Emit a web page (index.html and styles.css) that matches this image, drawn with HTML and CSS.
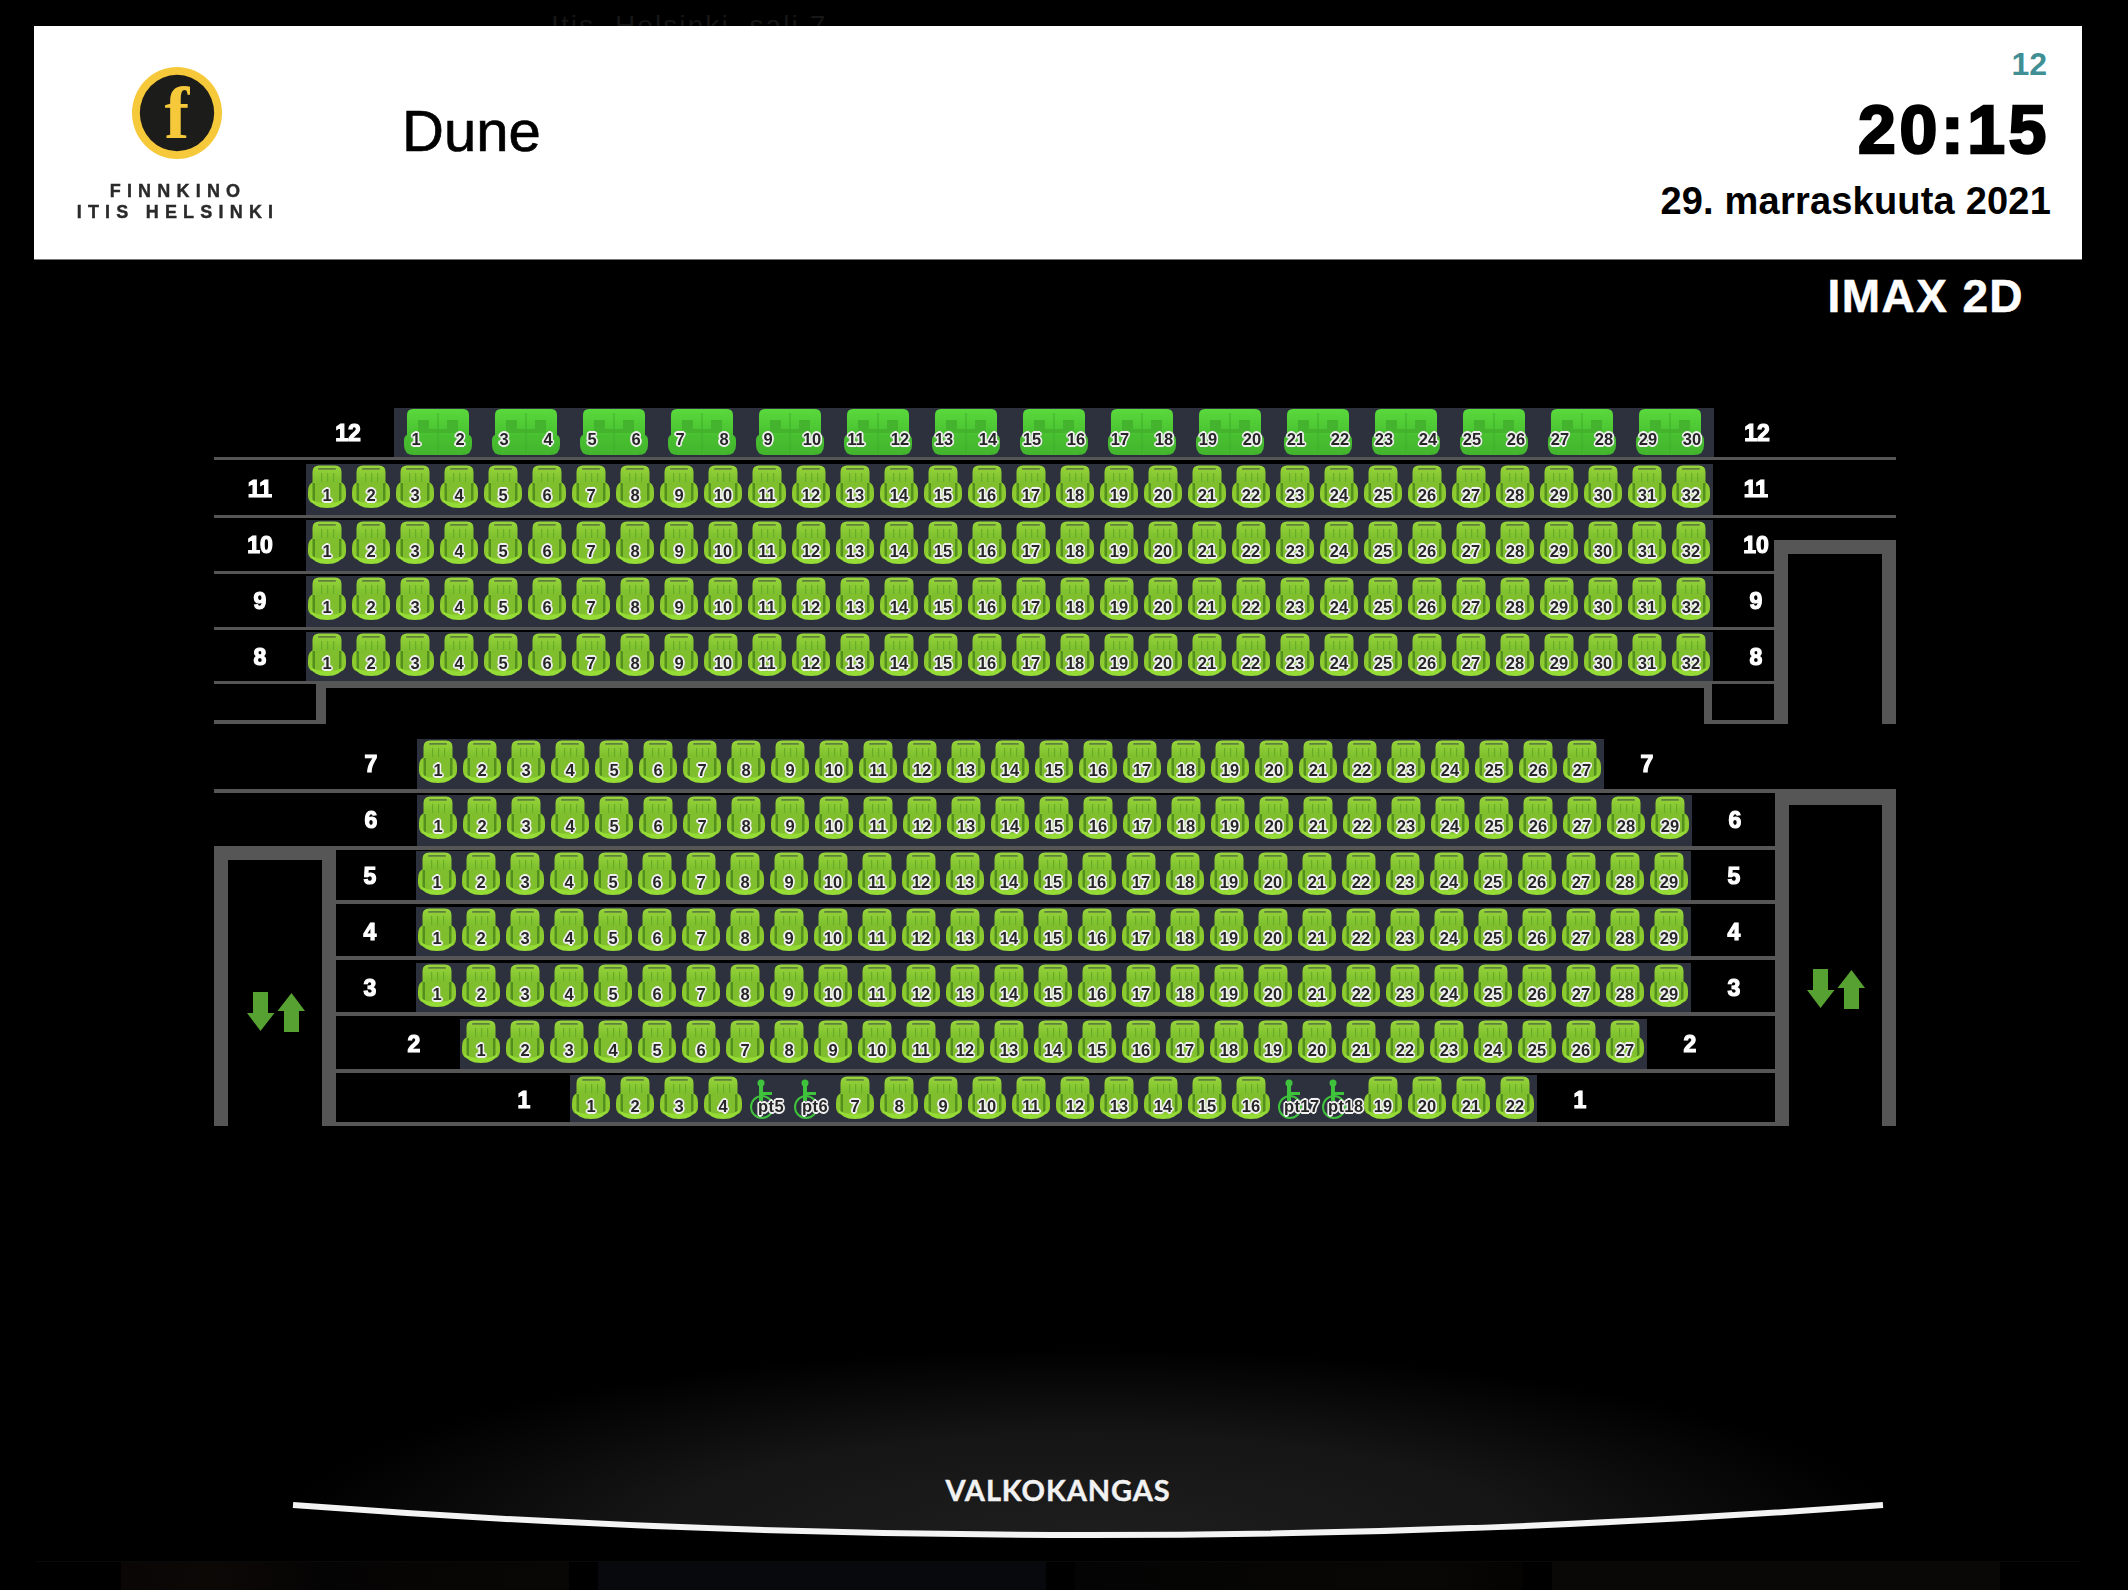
FILE: index.html
```html
<!DOCTYPE html>
<html lang="fi">
<head>
<meta charset="utf-8">
<title>Dune</title>
<link rel="stylesheet" href="styles.css">
</head>
<body>
<div class="ghost">Itis, Helsinki, sali 7</div>
<header class="head">
  <div class="brand">
    <svg class="oval" viewBox="0 0 92 94"><ellipse cx="46" cy="47" rx="46" ry="47" fill="#f6c93b"/><ellipse cx="46" cy="47" rx="38" ry="39" fill="#1c1c1a"/><text x="46" y="73" text-anchor="middle" class="oval-f">f</text></svg>
    <div class="brand-name">FINNKINO<br>ITIS HELSINKI</div>
  </div>
  <h1 class="title">Dune</h1>
  <div class="info">
    <div class="age">12</div>
    <div class="time">20:15</div>
    <div class="date">29. marraskuuta 2021</div>
  </div>
</header>
<div class="format">IMAX 2D</div>

<section class="hall upper">
  <div class="row r12"><span class="lab">12</span><div class="seats sofas"><b class="sofa"><i>1</i><i>2</i></b><b class="sofa"><i>3</i><i>4</i></b><b class="sofa"><i>5</i><i>6</i></b><b class="sofa"><i>7</i><i>8</i></b><b class="sofa"><i>9</i><i>10</i></b><b class="sofa"><i>11</i><i>12</i></b><b class="sofa"><i>13</i><i>14</i></b><b class="sofa"><i>15</i><i>16</i></b><b class="sofa"><i>17</i><i>18</i></b><b class="sofa"><i>19</i><i>20</i></b><b class="sofa"><i>21</i><i>22</i></b><b class="sofa"><i>23</i><i>24</i></b><b class="sofa"><i>25</i><i>26</i></b><b class="sofa"><i>27</i><i>28</i></b><b class="sofa"><i>29</i><i>30</i></b></div><span class="lab end">12</span></div>
  <div class="row r11"><span class="lab">11</span><div class="seats"><b>1</b><b>2</b><b>3</b><b>4</b><b>5</b><b>6</b><b>7</b><b>8</b><b>9</b><b>10</b><b>11</b><b>12</b><b>13</b><b>14</b><b>15</b><b>16</b><b>17</b><b>18</b><b>19</b><b>20</b><b>21</b><b>22</b><b>23</b><b>24</b><b>25</b><b>26</b><b>27</b><b>28</b><b>29</b><b>30</b><b>31</b><b>32</b></div><span class="lab end">11</span></div>
  <div class="row r10"><span class="lab">10</span><div class="seats"><b>1</b><b>2</b><b>3</b><b>4</b><b>5</b><b>6</b><b>7</b><b>8</b><b>9</b><b>10</b><b>11</b><b>12</b><b>13</b><b>14</b><b>15</b><b>16</b><b>17</b><b>18</b><b>19</b><b>20</b><b>21</b><b>22</b><b>23</b><b>24</b><b>25</b><b>26</b><b>27</b><b>28</b><b>29</b><b>30</b><b>31</b><b>32</b></div><span class="lab end">10</span></div>
  <div class="row r9"><span class="lab">9</span><div class="seats"><b>1</b><b>2</b><b>3</b><b>4</b><b>5</b><b>6</b><b>7</b><b>8</b><b>9</b><b>10</b><b>11</b><b>12</b><b>13</b><b>14</b><b>15</b><b>16</b><b>17</b><b>18</b><b>19</b><b>20</b><b>21</b><b>22</b><b>23</b><b>24</b><b>25</b><b>26</b><b>27</b><b>28</b><b>29</b><b>30</b><b>31</b><b>32</b></div><span class="lab end">9</span></div>
  <div class="row r8"><span class="lab">8</span><div class="seats"><b>1</b><b>2</b><b>3</b><b>4</b><b>5</b><b>6</b><b>7</b><b>8</b><b>9</b><b>10</b><b>11</b><b>12</b><b>13</b><b>14</b><b>15</b><b>16</b><b>17</b><b>18</b><b>19</b><b>20</b><b>21</b><b>22</b><b>23</b><b>24</b><b>25</b><b>26</b><b>27</b><b>28</b><b>29</b><b>30</b><b>31</b><b>32</b></div><span class="lab end">8</span></div>
  <div class="aisle"><div class="notch-l"></div><div class="aisle-mid"></div><div class="notch-r"></div><div class="aisle-end"></div></div>
  <div class="frame frame-upper"></div>
</section>

<section class="hall lower">
  <div class="row r7"><span class="lab">7</span><div class="seats"><b>1</b><b>2</b><b>3</b><b>4</b><b>5</b><b>6</b><b>7</b><b>8</b><b>9</b><b>10</b><b>11</b><b>12</b><b>13</b><b>14</b><b>15</b><b>16</b><b>17</b><b>18</b><b>19</b><b>20</b><b>21</b><b>22</b><b>23</b><b>24</b><b>25</b><b>26</b><b>27</b></div><span class="lab end">7</span></div>
  <div class="row r6"><span class="lab">6</span><div class="seats"><b>1</b><b>2</b><b>3</b><b>4</b><b>5</b><b>6</b><b>7</b><b>8</b><b>9</b><b>10</b><b>11</b><b>12</b><b>13</b><b>14</b><b>15</b><b>16</b><b>17</b><b>18</b><b>19</b><b>20</b><b>21</b><b>22</b><b>23</b><b>24</b><b>25</b><b>26</b><b>27</b><b>28</b><b>29</b></div><span class="lab end">6</span></div>
  <div class="row r5"><span class="lab">5</span><div class="seats"><b>1</b><b>2</b><b>3</b><b>4</b><b>5</b><b>6</b><b>7</b><b>8</b><b>9</b><b>10</b><b>11</b><b>12</b><b>13</b><b>14</b><b>15</b><b>16</b><b>17</b><b>18</b><b>19</b><b>20</b><b>21</b><b>22</b><b>23</b><b>24</b><b>25</b><b>26</b><b>27</b><b>28</b><b>29</b></div><span class="lab end">5</span></div>
  <div class="row r4"><span class="lab">4</span><div class="seats"><b>1</b><b>2</b><b>3</b><b>4</b><b>5</b><b>6</b><b>7</b><b>8</b><b>9</b><b>10</b><b>11</b><b>12</b><b>13</b><b>14</b><b>15</b><b>16</b><b>17</b><b>18</b><b>19</b><b>20</b><b>21</b><b>22</b><b>23</b><b>24</b><b>25</b><b>26</b><b>27</b><b>28</b><b>29</b></div><span class="lab end">4</span></div>
  <div class="row r3"><span class="lab">3</span><div class="seats"><b>1</b><b>2</b><b>3</b><b>4</b><b>5</b><b>6</b><b>7</b><b>8</b><b>9</b><b>10</b><b>11</b><b>12</b><b>13</b><b>14</b><b>15</b><b>16</b><b>17</b><b>18</b><b>19</b><b>20</b><b>21</b><b>22</b><b>23</b><b>24</b><b>25</b><b>26</b><b>27</b><b>28</b><b>29</b></div><span class="lab end">3</span></div>
  <div class="row r2"><span class="lab">2</span><div class="seats"><b>1</b><b>2</b><b>3</b><b>4</b><b>5</b><b>6</b><b>7</b><b>8</b><b>9</b><b>10</b><b>11</b><b>12</b><b>13</b><b>14</b><b>15</b><b>16</b><b>17</b><b>18</b><b>19</b><b>20</b><b>21</b><b>22</b><b>23</b><b>24</b><b>25</b><b>26</b><b>27</b></div><span class="lab end">2</span></div>
  <div class="row r1"><span class="lab">1</span><div class="seats"><b>1</b><b>2</b><b>3</b><b>4</b><b class="wc">pt5</b><b class="wc">pt6</b><b>7</b><b>8</b><b>9</b><b>10</b><b>11</b><b>12</b><b>13</b><b>14</b><b>15</b><b>16</b><b class="wc">pt17</b><b class="wc">pt18</b><b>19</b><b>20</b><b>21</b><b>22</b></div><span class="lab end">1</span></div>
  <div class="frame frame-left"><svg class="arrows" viewBox="0 0 58 40"><path d="M6 0H21V21H27.500L13.500 39 0 21H6Z"/><path d="M37 40H52V19H58L44.500 1 30.500 19H37Z"/></svg></div>
  <div class="frame frame-right"><svg class="arrows" viewBox="0 0 58 40"><path d="M6 0H21V21H27.500L13.500 39 0 21H6Z"/><path d="M37 40H52V19H58L44.500 1 30.500 19H37Z"/></svg></div>
</section>

<section class="screen">
  <svg class="screen-art" viewBox="0 0 2128 260">
    <defs><radialGradient id="glow" gradientUnits="userSpaceOnUse" cx="0" cy="0" r="1" gradientTransform="translate(1088 238) scale(810 190)"><stop offset="0" stop-color="#1e1e1e"/><stop offset=".55" stop-color="#151515"/><stop offset=".8" stop-color="#090909"/><stop offset="1" stop-color="#000"/></radialGradient></defs>
    <path d="M293 205Q1088 265 1883 205V0H293Z" fill="url(#glow)"/>
    <path d="M293 205Q1088 265 1883 205" fill="none" stroke="#f4f4f4" stroke-width="6"/>
  </svg>
  <div class="screen-label">VALKOKANGAS</div>
</section>

<div class="thumbs">
  <div class="thumb t1"></div><div class="thumb t2"></div><div class="thumb t3"></div><div class="thumb t4"></div>
</div>
</body>
</html>
```
FILE: styles.css
```css
* { box-sizing: border-box; }
html, body { margin: 0; padding: 0; }
body {
  position: relative;
  width: 2128px;
  height: 1590px;
  overflow: hidden;
  background: #000;
  font-family: "Liberation Sans", Arial, sans-serif;
  color: #fff;
}
.ghost {
  position: absolute;
  left: 551px;
  top: 10px;
  font-size: 28px;
  line-height: 32px;
  letter-spacing: 2.1px;
  color: #161616;
}
.head {
  position: relative;
  z-index: 1;
  display: flex;
  align-items: flex-start;
  height: 234px;
  margin: 26px 46px 0 34px;
  background: #fff;
  border-bottom: 1px solid #777;
  color: #000;
}
.brand {
  display: flex;
  flex-direction: column;
  align-items: center;
  width: 288px;
  padding-top: 40px;
  filter: blur(.5px);
}
.oval { width: 90px; height: 94px; margin-right: 3px; }
.oval-f {
  font-family: "Liberation Serif", serif;
  font-weight: 700;
  font-size: 76px;
  fill: #f6c93b;
}
.brand-name {
  margin-top: 21px;
  font-weight: 700;
  font-size: 18px;
  line-height: 21px;
  letter-spacing: 6.2px;
  text-align: center;
  color: #2a2a2a;
  -webkit-text-stroke: .4px #2a2a2a;
}
.title {
  margin: 73px 0 0 80px;
  font-weight: 400;
  font-size: 58px;
  line-height: 64px;
  -webkit-text-stroke: .7px #000;
}
.info {
  margin-left: auto;
  padding: 20px 31px 0 0;
  text-align: right;
}
.age {
  margin-right: 4px;
  font-weight: 700;
  font-size: 32px;
  line-height: 36px;
  color: #3f8f95;
}
.time {
  margin: 14px 1px 0 0;
  font-weight: 700;
  font-size: 68px;
  line-height: 66px;
  letter-spacing: 3.6px;
  -webkit-text-stroke: 2.4px #000;
}
.date {
  margin-top: 18px;
  font-weight: 700;
  font-size: 38px;
  line-height: 42px;
  letter-spacing: .2px;
}
.format {
  margin: 8px 104px 0 0;
  text-align: right;
  font-weight: 700;
  font-size: 46px;
  line-height: 56px;
  letter-spacing: 1.4px;
  -webkit-text-stroke: .5px #fff;
}

.hall {
  position: relative;
  width: 1682px;
  margin-left: 214px;
}
.upper { margin-top: 80px; }
.lower { margin-top: 12px; }
.row {
  display: flex;
  border-bottom: 3px solid #565656;
}
.lower .row { border-bottom-width: 4px; }
.r12 { height: 56px; padding: 4px 0 0 88px; }
.r11 { height: 58px; padding-top: 4px; }
.r10, .r9 { height: 56px; padding-top: 2px; }
.r8 { height: 54px; padding-top: 2px; }
.r7 { height: 57px; padding: 3px 0 0 111px; }
.r6 { height: 57px; padding: 2px 0 0 111px; }
.r5 { height: 54px; padding: 1px 0 0 110px; }
.r4 { height: 56px; padding: 3px 0 0 110px; }
.r3 { height: 56px; padding: 3px 0 0 110px; }
.r2 { height: 57px; padding: 3px 0 0 154px; }
.r1 { height: 53px; padding: 2px 0 0 264px; }
.lab {
  width: 92px;
  flex: none;
  text-align: center;
  font-weight: 700;
  font-size: 23px;
  line-height: 50px;
  -webkit-text-stroke: 1.2px #fff;
  filter: blur(.6px);
}
.lab.end { width: 86px; }
.seats {
  display: flex;
  gap: 6px;
  padding: 1px 3px 0 2px;
  background: #2d313d;
  filter: blur(.55px);
}
.seats b {
  display: block;
  flex: none;
  width: 38px;
  height: 43px;
  padding-top: 22px;
  font-size: 16.5px;
  line-height: 17px;
  text-align: center;
  color: #262626;
  text-shadow: 1.6px 0 0 #f0f0f0, -1.6px 0 0 #f0f0f0, 0 1.6px 0 #f0f0f0, 0 -1.6px 0 #f0f0f0, 1.3px 1.3px 0 #e8e8e8, -1.3px 1.3px 0 #e8e8e8, 1.3px -1.3px 0 #e8e8e8, -1.3px -1.3px 0 #e8e8e8, 0 0 3px #ccc;
  background: url("data:image/svg+xml,%3Csvg xmlns='http://www.w3.org/2000/svg' viewBox='0 0 38 43'%3E%3Cdefs%3E%3ClinearGradient id='a' x2='0' y2='1'%3E%3Cstop stop-color='%2398d53a'/%3E%3Cstop offset='1' stop-color='%2374b82a'/%3E%3C/linearGradient%3E%3C/defs%3E%3Cpath d='M4.500 22V7Q4.500 .5 11 .5H27Q33.500 .5 33.500 7V22Z' fill='url(%23a)'/%3E%3Crect x='10' y='3' width='18' height='1.800' rx='.9' fill='%2360803f'/%3E%3Crect x='13' y='8' width='1.200' height='10' fill='%2368ad28'/%3E%3Crect x='19' y='8' width='1.200' height='10' fill='%2368ad28'/%3E%3Crect x='25' y='8' width='1.200' height='10' fill='%2368ad28'/%3E%3Cpath d='M0 27Q0 18 6 17H32Q38 18 38 27V31Q38 38 30 39H8Q0 38 0 31Z' fill='%238ccb30'/%3E%3Crect x='4.500' y='18' width='2.500' height='18' fill='%23528f1e'/%3E%3Crect x='31' y='18' width='2.500' height='18' fill='%23528f1e'/%3E%3Crect x='7' y='17' width='24' height='20' fill='%237fbe2c'/%3E%3Cpath d='M2 33Q5 43 19 43Q33 43 36 33Q31 38.500 19 38.500Q7 38.500 2 33Z' fill='%2396dc36'/%3E%3C/svg%3E") center / 38px 43px no-repeat;
}
.sofas { gap: 20px; padding: 1px 10px 0; }
.seats .sofa {
  display: flex;
  justify-content: space-between;
  width: 68px;
  height: 46px;
  background: url("data:image/svg+xml,%3Csvg xmlns='http://www.w3.org/2000/svg' viewBox='0 0 68 46'%3E%3Cdefs%3E%3ClinearGradient id='a' x2='0' y2='1'%3E%3Cstop stop-color='%235ad93c'/%3E%3Cstop offset='.6' stop-color='%2348bf30'/%3E%3Cstop offset='1' stop-color='%2343b52d'/%3E%3C/linearGradient%3E%3C/defs%3E%3Cpath d='M3 26V6Q3 0 9 0H59Q65 0 65 6V26Q68 27 68 32V36Q68 46 58 46H10Q0 46 0 36V32Q0 27 3 26Z' fill='url(%23a)'/%3E%3Cpath d='M14 24V11H25V20H43V11H54V24Z' fill='%2344b42f'/%3E%3Crect x='33.500' y='4' width='1' height='40' fill='%2341ad2d'/%3E%3C/svg%3E") center / 68px 46px no-repeat;
}
.sofa i { width: 24px; font-style: normal; }
.seats .wc {
  position: relative;
  padding-left: 8px;
  padding-right: 0;
  white-space: nowrap;
  letter-spacing: .4px;
  background: url("data:image/svg+xml,%3Csvg xmlns='http://www.w3.org/2000/svg' viewBox='0 0 38 43'%3E%3Ccircle cx='13' cy='7' r='3.500' fill='%233fc23c'/%3E%3Crect x='11' y='10' width='4' height='15' fill='%233fc23c'/%3E%3Crect x='11' y='16' width='13' height='3' fill='%233fc23c'/%3E%3Ccircle cx='14' cy='31' r='11' fill='none' stroke='%233fc23c' stroke-width='2'/%3E%3C/svg%3E") center / 38px 43px no-repeat;
}

.aisle { display: flex; height: 40px; }
.notch-l { width: 112px; border-right: 10px solid #565656; border-bottom: 4px solid #565656; }
.aisle-mid { width: 1378px; border-top: 4px solid #565656; }
.notch-r { width: 84px; border-left: 8px solid #565656; border-bottom: 4px solid #565656; }
.aisle-end { flex: 1; }
.frame {
  position: absolute;
  display: flex;
  justify-content: center;
  background: #000;
  border: 14px solid #565656;
  border-bottom: 0;
}
.frame-upper { right: 0; top: 136px; width: 122px; height: 184px; }
.frame-left { left: 0; top: 110px; width: 122px; height: 280px; padding: 132px 0 0 1px; }
.frame-right { right: 0; top: 55px; width: 121px; height: 335px; padding-top: 164px; }
.arrows { width: 58px; height: 40px; fill: #57a032; }

.screen {
  position: relative;
  height: 260px;
  margin-top: 174px;
  padding-top: 174px;
}
.screen-art { position: absolute; left: 0; top: 0; width: 2128px; height: 260px; }
.screen-label {
  position: relative;
  margin-left: -12px;
  text-align: center;
  font-family: Lato, "Open Sans", sans-serif;
  font-weight: 700;
  font-size: 29px;
  line-height: 32px;
  letter-spacing: .9px;
  color: #f2f2f2;
  -webkit-text-stroke: .4px #f2f2f2;
}
.thumbs {
  display: flex;
  gap: 29px;
  height: 30px;
  margin: 1px 48px 0 35px;
  padding-left: 86px;
  border-top: 1px solid #0a0a0a;
}
.thumb { width: 448px; }
.t1 { background: linear-gradient(90deg, #0a0605 0%, #0c0806 20%, #050404 45%, #090705 100%); }
.t2 { background: #07090c; }
.t3 { background: linear-gradient(90deg, #040404, #080705 80%, #040302); }
.t4 { background: #090807; }
```
